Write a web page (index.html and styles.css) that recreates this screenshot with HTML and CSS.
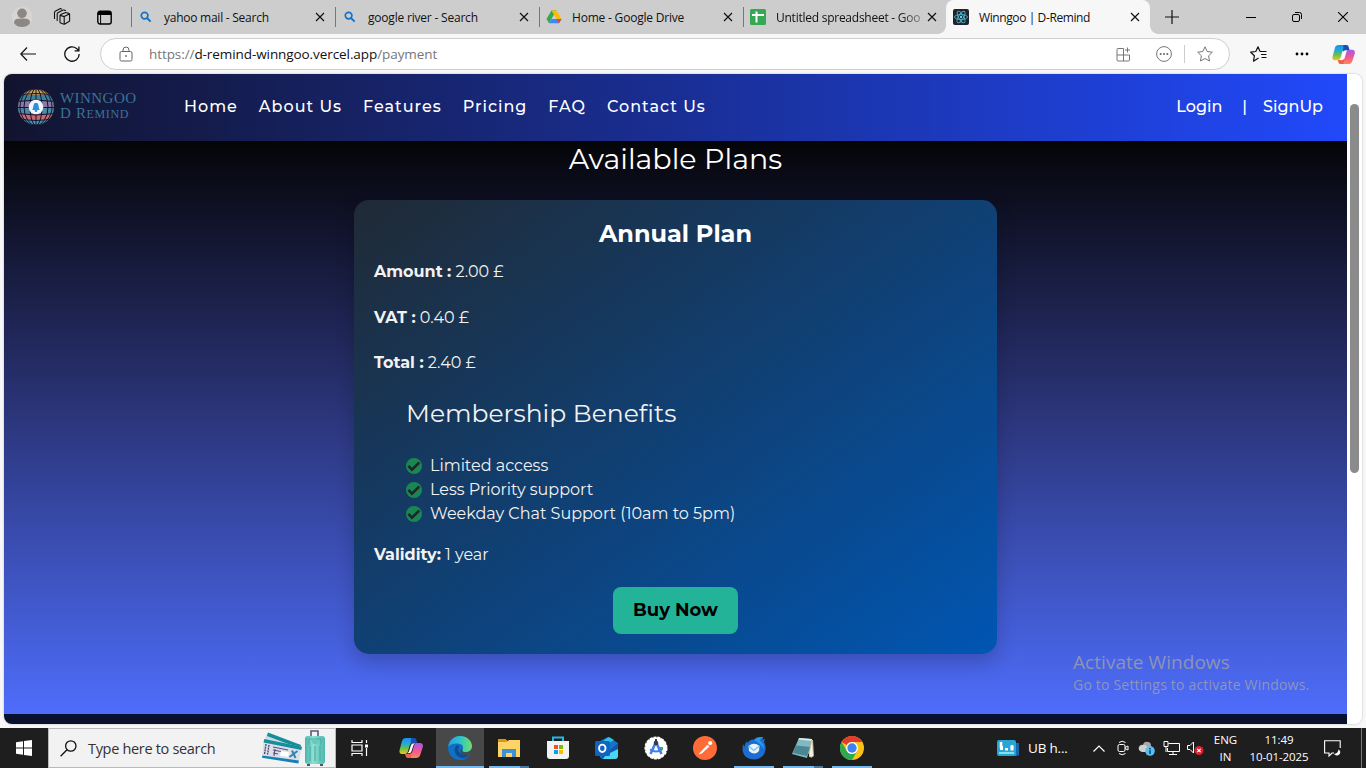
FILE: index.html
```html
<!DOCTYPE html>
<html lang="en">
<head>
<meta charset="utf-8">
<title>Winngoo | D-Remind</title>
<link rel="stylesheet" href="styles.css">
</head>
<body>
<svg width="0" height="0" class="defs" aria-hidden="true">
  <defs>
    <linearGradient id="cpA" x1="0" y1="0" x2="0" y2="1"><stop offset="0" stop-color="#1c8fe8"/><stop offset=".35" stop-color="#25a9d8"/><stop offset=".65" stop-color="#68c04a"/><stop offset="1" stop-color="#f4c51c"/></linearGradient>
    <linearGradient id="cpB" x1="0" y1="0" x2="0" y2="1"><stop offset="0" stop-color="#a259ee"/><stop offset=".5" stop-color="#f0569a"/><stop offset="1" stop-color="#fb8a56"/></linearGradient>
    <linearGradient id="edgeA" x1="0" y1="0" x2="1" y2="0"><stop offset="0" stop-color="#249fe0"/><stop offset=".5" stop-color="#2fc3c9"/><stop offset="1" stop-color="#6ee06a"/></linearGradient>
    <linearGradient id="bag" x1="0" y1="0" x2="1" y2="0"><stop offset="0" stop-color="#45b5ab"/><stop offset=".4" stop-color="#8fe0d2"/><stop offset="1" stop-color="#4bb9ae"/></linearGradient>
    <symbol id="search" viewBox="0 0 12 12"><circle cx="4.6" cy="4.6" r="3.3" fill="none" stroke="#1570c8" stroke-width="1.7"/><path d="M7 7l3.6 3.6" stroke="#1570c8" stroke-width="1.9"/></symbol>
    <symbol id="close" viewBox="0 0 10 10"><path d="M1 1l8 8M9 1l-8 8" stroke="#111" stroke-width="1.2"/></symbol>
    <symbol id="copilot" viewBox="0 0 24 22"><path d="M7 1h8l3 5h-4c-2 0-3 1-3.500 3L9 14c-.5 2-1.500 3-3.500 3H3C.8 17 0 15 .6 13L3 4c.6-2 2-3 4-3z" fill="url(#cpA)"/><path d="M12 1h3c1.500 0 2 .8 2.500 2.500L18.500 7h-4c-1.500 0-2.500.4-3 1z" fill="#1b50b8"/><path d="M17 21H9l-3-4h4c2 0 3-1 3.500-3L15 8.500C15.500 7 16.500 6 18 6h3c2.500 0 3.300 2 2.800 4l-2.600 8c-.6 2-2.200 3-4.200 3z" fill="url(#cpB)"/><path d="M12 21H9c-1.500 0-2-.8-2.500-2.500L6 17h4c1.500 0 2.300-.5 3-1.500z" fill="#ed6248"/><path d="M11.800 8.500Q12.500 6.500 14.500 6.500H16Q14.800 7 14.300 8.500L12.600 14Q12 16.200 10 16.200H8.300Q9.600 15.500 10.100 14z" fill="#fff"/></symbol>
    <symbol id="check" viewBox="0 0 16 16"><circle cx="8" cy="8" r="8" fill="#198754"/><path d="M2.400 7.800l3.600 3.800L13.300 4.500" fill="none" stroke="#212529" stroke-width="2.500"/></symbol>
  </defs>
</svg>

<header class="tabstrip">
  <svg class="avatar" viewBox="0 0 22 22"><circle cx="11" cy="11" r="10.500" fill="#d8d4d0"/><circle cx="11" cy="7.300" r="4.800" fill="#8b8784"/><path d="M3 17c0-4 3-4.500 8-4.500s8 .5 8 4.500c-2 3-5 4-8 4s-6-1-8-4z" fill="#8b8784"/></svg>
  <svg class="spaces" viewBox="0 0 18 18" fill="none" stroke="#111" stroke-width="1.100" stroke-linejoin="round"><path d="M7 7.800Q7 7 7.800 6.600L12 4.800q.8-.3 1.500-.1l2.300.7q.8.200.8 1v6q0 .8-.7 1.200l-4 2.400q-.8.400-1.600.1L7.700 15q-.7-.3-.7-1zM7.200 7.400l4 1.200 5.200-2.700M11.200 8.600v7.800M4.200 13V6q0-.8.7-1.200L9.500 2.200Q10.200 1.800 11 2l2 .7M1.500 11V4.500q0-.8.7-1.200L6.500.9Q7.200.5 8 .8l1 .3"/></svg>
  <svg class="tabmenu" viewBox="0 0 15 15"><rect x=".8" y="1.300" width="13.400" height="12.700" rx="2.200" fill="none" stroke="#000" stroke-width="1.400"/><path d="M1 3.500Q1 1 3.500 1h8Q14 1 14 3.500V5H1z"/><path d="M3.600 5v9" stroke="#000"/></svg>
  <div class="tab"><svg class="fav small"><use href="#search"/></svg><span class="t1">yahoo mail - Search</span><svg class="x"><use href="#close"/></svg></div>
  <div class="tab"><svg class="fav small"><use href="#search"/></svg><span class="t2">google river - Search</span><svg class="x"><use href="#close"/></svg></div>
  <div class="tab"><svg class="fav" viewBox="0 0 16 16"><path d="M5.500 1.500h5L5.800 9.700 3 14.300.5 10z" fill="#34a853"/><path d="M5.500 1.500h5L15.500 10h-5z" fill="#fbbc04"/><path d="M3 14.300L5.600 10h9.900L13 14.300z" fill="#4285f4"/><path d="M10.500 10h5L13 14.300z" fill="#ea4335"/><path d="M8 5.800L10.500 10h-5z" fill="#cdcdcd"/></svg><span class="t3">Home - Google Drive</span><svg class="x"><use href="#close"/></svg></div>
  <div class="tab"><svg class="fav" viewBox="0 0 16 16"><rect width="16" height="16" rx="1.500" fill="#34a853"/><path d="M2 6h12M6.500 2.500V13.500" stroke="#fff" stroke-width="2"/></svg><span class="t4 fade">Untitled spreadsheet - Goo</span><svg class="x"><use href="#close"/></svg></div>
  <div class="tab active"><svg class="fav" viewBox="0 0 16 16"><rect width="16" height="16" rx="2" fill="#20232a"/><g fill="none" stroke="#4fb3cd" stroke-width=".9"><ellipse cx="8" cy="8" rx="6.500" ry="2.500"/><ellipse cx="8" cy="8" rx="6.500" ry="2.500" transform="rotate(60 8 8)"/><ellipse cx="8" cy="8" rx="6.500" ry="2.500" transform="rotate(120 8 8)"/></g><circle cx="8" cy="8" r="1.200" fill="#61dafb"/></svg><span class="t5">Winngoo | D-Remind</span><svg class="x"><use href="#close"/></svg></div>
  <div class="newtab"><svg viewBox="0 0 14 14"><path d="M7 0v14M0 7h14" stroke="#111" stroke-width="1.200"/></svg></div>
  <div class="wincontrols">
    <svg viewBox="0 0 10 10"><path d="M0 5.500h10" stroke="#000"/></svg>
    <svg viewBox="0 0 10 10" fill="none" stroke="#000"><rect x=".5" y="2.500" width="7" height="7" rx="1.500"/><path d="M3 .5h4.500a2 2 0 0 1 2 2V7"/></svg>
    <svg viewBox="0 0 10 10"><path d="M0 0l10 10M10 0L0 10" stroke="#000" stroke-width="1.100"/></svg>
  </div>
</header>

<div class="toolbar">
  <svg class="back" viewBox="0 0 16 14" fill="none" stroke="#111" stroke-width="1.200"><path d="M7 .5L.8 7 7 13.500M1 7h15"/></svg>
  <svg class="reload" viewBox="0 0 16 16" fill="none" stroke="#111" stroke-width="1.300"><path d="M15.200 8A7.200 7.200 0 1 1 12.500 2.400L14.600 4.500M14.900.5v4.300h-4.300"/></svg>
  <div class="omnibox">
    <svg class="lock" viewBox="0 0 14 16" fill="none" stroke="#666"><rect x="1" y="5.500" width="12" height="9.500" rx="1.500"/><path d="M4 5.500V4a3 3 0 0 1 6 0v1.500"/><circle cx="7" cy="10" r=".5" fill="#666"/></svg>
    <span class="url">https://<b>d-remind-winngoo.vercel.app</b>/payment</span>
    <svg class="apps" viewBox="0 0 15 15" fill="none" stroke="#777"><path d="M7.500 1.500H2A1 1 0 0 0 1 2.500V13a1 1 0 0 0 1 1h10.500a1 1 0 0 0 1-1V8M7.500 1.500V14M1 8h12.500M11.500.5v5M9 3h5"/></svg>
    <svg class="more-c" viewBox="0 0 16 16"><circle cx="8" cy="8" r="7.400" fill="none" stroke="#777"/><g fill="#666"><circle cx="4.700" cy="8" r="1"/><circle cx="8" cy="8" r="1"/><circle cx="11.300" cy="8" r="1"/></g></svg>
    <i class="sep"></i>
    <svg class="star" viewBox="0 0 16 16" fill="none" stroke="#777" stroke-linejoin="round"><path d="M8 .8l2.200 4.700 5.100.7-3.700 3.600.9 5.200L8 12.500 3.500 15l.9-5.200L.7 6.200l5.100-.7z"/></svg>
  </div>
  <svg class="favs" viewBox="0 0 17 16" fill="none" stroke="#111" stroke-width="1.200" stroke-linejoin="round"><path d="M10 5.500L8 .8 5.800 5.500.7 6.200l3.700 3.600-.9 5.400L8.500 12M10 5.500h6.500M11 8.500h5.500M11.500 11.500h5"/></svg>
  <svg class="dots" viewBox="0 0 14 4"><circle cx="2" cy="2" r="1.400"/><circle cx="7" cy="2" r="1.400"/><circle cx="12" cy="2" r="1.400"/></svg>
  <svg class="cop"><use href="#copilot"/></svg>
</div>

<div class="window">
  <div class="site">
    <nav class="nav">
      <div class="logo">
        <svg viewBox="0 0 38 38"><defs><clipPath id="globe"><circle cx="19" cy="19" r="18"/></clipPath></defs><g clip-path="url(#globe)"><path fill="#14152f" d="M0 0h38v38H0z"/><path fill="#c9a05c" d="M0 0h38v7H0z"/><path fill="#3f8298" d="M0 7h38v6H0z"/><path fill="#8a78a5" d="M0 13h38v7H0z"/><path fill="#4f8aa5" d="M0 20h38v6H0z"/><path fill="#c86a74" d="M0 26h38v6H0z"/><path fill="#4996b2" d="M0 32h38v6H0z"/><g fill="none" stroke="#14152f" stroke-width="1"><path d="M0 8q19-5 38 0M0 13.500q19-3 38 0M0 19.500h38M0 25.500q19 3 38 0M0 30q19 5 38 0M19 0v38"/><ellipse cx="19" cy="19" rx="6" ry="18.500"/><ellipse cx="19" cy="19" rx="12" ry="18.500"/><ellipse cx="19" cy="19" rx="16" ry="18.500"/></g></g><circle cx="19" cy="19" r="7.300" fill="#f4f6fb"/><path d="M15 22c1.500-1 1-6 2.800-7h2.400c1.800 1 1.300 6 2.800 7z" fill="#2c91dc"/><circle cx="19" cy="22.800" r="1.300" fill="#2c91dc"/></svg>
        <div class="brand"><span class="b1">WINNGOO</span><span class="b2">D R<small>EMIND</small></span></div>
      </div>
      <div class="links"><a>Home</a><a>About Us</a><a>Features</a><a>Pricing</a><a>FAQ</a><a>Contact Us</a></div>
      <div class="auth"><a>Login</a><span>|</span><a>SignUp</a></div>
    </nav>
    <main class="plans">
      <h1>Available Plans</h1>
      <section class="card">
        <h2>Annual Plan</h2>
        <p><b>Amount :</b> 2.00 £</p>
        <p><b>VAT :</b> 0.40 £</p>
        <p><b>Total :</b> 2.40 £</p>
        <h3>Membership Benefits</h3>
        <ul>
          <li><svg><use href="#check"/></svg>Limited access</li>
          <li><svg><use href="#check"/></svg>Less Priority support</li>
          <li><svg><use href="#check"/></svg>Weekday Chat Support (10am to 5pm)</li>
        </ul>
        <p class="validity"><b>Validity:</b> 1 year</p>
        <button>Buy Now</button>
      </section>
    </main>
    <footer class="foot"></footer>
  </div>
  <div class="scroll"><div class="thumb"></div></div>
</div>

<div class="watermark"><div class="w1">Activate Windows</div><div class="w2">Go to Settings to activate Windows.</div></div>

<div class="taskbar">
  <div class="start"><svg viewBox="0 0 16 16" fill="#fff"><path d="M0 2.200l7-1V7.500H0zM8 1.100L16 0v7.500H8zM0 8.500h7v6.300l-7-1zM8 8.500h8V16l-8-1.100z"/></svg></div>
  <div class="searchbox">
    <svg class="mag" viewBox="0 0 17 17" fill="none" stroke="#111" stroke-width="1.300"><circle cx="10.800" cy="6" r="5.200"/><path d="M7 9.800L.6 16.300"/></svg>
    <span>Type here to search</span>
    <svg class="travel" viewBox="0 0 66 38"><path d="M6 4l34 13-5 12L2 17z" fill="#d3d9e3"/><path d="M7 3.500l33 12.500-.8 3.500L6 7z" fill="#128f98"/><path d="M3 10l38 8-3.500 16L1 28z" fill="#dcdeea"/><path d="M3.300 10L41 17.800l-.7 3.200L2.600 13.500z" fill="#148f9b"/><path d="M1.400 26.500l36.500 5-.6 3L1 28.800z" fill="#1480b5"/><path d="M5 15l-1.500 10M8 16L6.500 25.500" stroke="#50496f" stroke-width="1.400" stroke-dasharray="2 .7"/><path d="M12 18l15 3M12 21l8 1.500M12 24l5 1M14 20l-1 7" stroke="#5b5479" stroke-width="1.200"/><path fill="#fff" d="M20 22l8 1.300-1 4.700-8-1.300z"/><path d="M28.500 28l8-6M31 21.500l3.500 7.500" stroke="#3586a8" stroke-width="2"/><path d="M50 8V2h7v6" fill="none" stroke="#555b7a" stroke-width="1.600"/><rect x="44" y="7" width="20" height="28" rx="3" fill="url(#bag)"/><path d="M49 17v15M54 17v15M59 17v15" stroke="#46a79d"/><path d="M48 10h12M48 10v6M60 10v6" fill="none" stroke="#46a79d"/><rect x="51" y="10" width="6" height="5" rx="2" fill="#68c8ba"/><path d="M46 35h3v2h-3zM59 35h3v2h-3z" fill="#405a70"/></svg>
  </div>
  <div class="app view"><svg viewBox="0 0 18 18" fill="none" stroke="#fff" stroke-width="1.200"><path d="M1 1v2.500h10V1M1 17v-2.500h10V17M1 6h10v6H1zM15.500 1v3M15.500 9v8"/><path fill="#fff" stroke="none" d="M14 5.500h3v3h-3z"/></svg></div>
  <div class="app"><svg class="big"><use href="#copilot"/></svg></div>
  <div class="app on full"><svg class="big" viewBox="0 0 24 24"><circle cx="12" cy="12" r="12" fill="#126fc2"/><path d="M.2 11C1 4 6 0 12 0c7 0 12 5 12 10 0 4-3 6.200-6.500 6.200-3 0-4-1.200-3-2.500 1.800-3-.5-6.200-4.800-6.200C5 7.500 1 9 .2 11z" fill="url(#edgeA)"/><path d="M8.500 9.500c-3 3-2 9 2.500 11.500 4 2.200 8 .5 11-3-1.500.8-4 1.200-6.500.6-4-.8-6.500-4-4.500-7.300.8-1.300-.8-2.800-2.500-1.800z" fill="#0c4d99"/><path d="M24 12v6l-2 0c-3 1.500-7 1.500-9-1-1-1.500-.8-3 .5-4.500.5 0 1.200.8.8 1.500-.6 1.200.8 2.200 3.200 2.200 3.500 0 6-1.700 6.500-4.200z" fill="#484848"/></svg></div>
  <div class="app on split"><svg class="big" viewBox="0 0 24 24"><path d="M1 4h9l2 2h-11z" fill="#e09b18"/><path d="M1 6h9l2-2h11v17H1z" fill="#ffd467"/><path d="M1 3h8v3H1z" fill="#dc960c"/><path d="M5 13h14v8h-4v-4H9v4H5z" fill="#3e91d3"/></svg></div>
  <div class="app"><svg class="big" viewBox="0 0 24 24"><path d="M7 6V1.500h10V6" fill="none" stroke="#28b6e8" stroke-width="2"/><path d="M1 5h22v15q0 3-3 3H4q-3 0-3-3z" fill="#f2f2f2"/><path fill="#f25022" d="M8 9h4v4H8z"/><path fill="#7fba00" d="M13 9h4v4h-4z"/><path fill="#00a4ef" d="M8 14h4v4H8z"/><path fill="#ffb900" d="M13 14h4v4h-4z"/></svg></div>
  <div class="app"><svg class="big" viewBox="0 0 24 24"><path d="M5 5l8-4 10 6v13l-3 3H7l-2-2z" fill="#1674cf"/><path d="M9 4l5-3 5 3-8 5z" fill="#2bc3ec"/><path d="M23 8v12q0 3-3 3H8l3-5z" fill="#4bd6f1"/><path d="M23 7v6l-12 6-4 4V12l8 2z" fill="#0e59ae"/><rect y="5" width="15" height="15" rx="1.500" fill="#0f64bf"/><ellipse cx="7.300" cy="12.300" rx="3.200" ry="3.700" fill="none" stroke="#fff" stroke-width="1.900"/></svg></div>
  <div class="app"><svg class="big" viewBox="0 0 24 24"><circle cx="12" cy="12" r="10.800" fill="#fff" stroke="#fff" stroke-width="1.500" stroke-dasharray="3 1"/><path d="M12 6L6.500 18M12 6l5.500 12" stroke="#407ff0" stroke-width="2.600"/><path d="M6 13.500q6 4 12 0" fill="none" stroke="#407ff0" stroke-width="1.800"/><circle cx="12" cy="7" r="2.300" fill="#333c49"/><path d="M11 3h2v3h-2z" fill="#333c49"/><path d="M16 11h3v3h-3z" fill="#43a66a"/></svg></div>
  <div class="app"><svg class="big" viewBox="0 0 24 24"><circle cx="12" cy="12" r="12" fill="#ff6c37"/><path d="M6 18l8.500-9 1.500 1.500L9 17z" fill="#fff" stroke="#fff" stroke-width=".7"/><circle cx="17.200" cy="7" r="2.100" fill="#fff"/></svg></div>
  <div class="app on"><svg class="big" viewBox="0 0 24 24"><path d="M1 8l1.500 3Q3 7 5 5l.5 2Q8 3 12 3.500 15 0 21.500 1.500L20 3.500 23 3l-1 3q2 3 1.500 8-1.500 8.500-11 9.500Q1 23 .5 13z" fill="#1b6dd0"/><path d="M12 4q5-4 9.500-2.500-3 .5-4 3 5 3 4.500 9-3-6-10-9.500z" fill="#269ce6"/><path d="M6.500 10q5.500-4.500 11 0l-.5 5q-4.500 5-10 0z" fill="#e4f3ff"/><path d="M6.500 10l5.300 4.500L17.500 10" fill="none" stroke="#8bb9de" stroke-width="1.300"/></svg></div>
  <div class="app on split"><svg class="big" viewBox="0 0 24 24"><path d="M8 2l14 2 1 16-3 2z" fill="#c9b88c"/><path d="M8 2l13 1-5 19-15-4z" fill="#81b9c0"/><path d="M5 9.500l14 1.500-3 9-14-3z" fill="#4a8792"/><path d="M8 2l13 1-.5 2-13-1.500z" fill="#dce7e8"/><path d="M21 4l1 16-4 1z" fill="#f1f2ef"/></svg></div>
  <div class="app on"><svg class="big" viewBox="0 0 24 24"><circle cx="12" cy="12" r="12" fill="#fbc116"/><path d="M1.600 6A12 12 0 0 1 22.400 6H12a6 6 0 0 0-5.200 3z" fill="#e33b2e"/><path d="M1.600 6A12 12 0 0 0 12 24l5.200-9A6 6 0 0 1 6.800 15z" fill="#2da94f"/><circle cx="12" cy="12" r="6" fill="#fff"/><circle cx="12" cy="12" r="4.700" fill="#3e82f1"/></svg></div>
  <div class="tray">
    <svg class="news" viewBox="0 0 22 16"><path d="M17 3h5v12l-2 1h-3z" fill="#1767ac"/><rect width="19" height="16" rx="2" fill="#28a5d4"/><path d="M2 12h15v2H2z" fill="#7fe2ee"/><path d="M4 2v6M15 5v4" stroke="#fff" stroke-width="2.600"/><path d="M3 6h3v4H3zM8 8h3v2.500H8zM13.500 6h3v4.500h-3z" fill="#fff"/></svg>
    <span class="ub">UB h...</span>
    <svg class="chev" viewBox="0 0 12 7" fill="none" stroke="#fff" stroke-width="1.200"><path d="M.5 6.500L6 1l5.500 5.500"/></svg>
    <svg class="meet" viewBox="0 0 12 16" fill="none" stroke="#fff"><rect x="1" y="4.500" width="7" height="7" rx="1.500"/><path d="M8 7.500L11 6v4L8 8.500M2 2.500Q5 0 8.500 2.500M2 13.500Q5 16 8.500 13.500"/></svg>
    <svg class="cloud" viewBox="0 0 17 15"><path d="M3 10q-3-1-2-4t4-2q1-4 5-3 3 0 3 4l3 5z" fill="#a8a8a8"/><path d="M4 4q4-1 7 4l-3 3H4Q0 10 1 6z" fill="#d0d0d0"/><circle cx="12" cy="10" r="4.800" fill="#58bff0"/><path d="M12 7v1.500M12 9.300V13" stroke="#083050" stroke-width="1.300"/></svg>
    <svg class="net" viewBox="0 0 17 14" fill="none" stroke="#fff"><path d="M5.500 2.500h11v8H4.500V7M10 10.500v3M6 13.500h8M1 .5h4v5H1zM3 5.500V11"/></svg>
    <svg class="vol" viewBox="0 0 17 14"><path d="M.5 4.500h2.500L6.500 1v11L3 8.500H.5z" fill="none" stroke="#fff"/><circle cx="12" cy="9.500" r="4.500" fill="#dc202c"/><path d="M10.300 7.800l3.400 3.400M13.700 7.800l-3.400 3.400" stroke="#fff" stroke-width="1.200"/></svg>
    <div class="lang"><span>ENG</span><span>IN</span></div>
    <div class="clock"><span>11:49</span><span>10-01-2025</span></div>
    <svg class="note" viewBox="0 0 17 17" fill="none" stroke="#fff" stroke-width="1.100"><path d="M10 13H8l-3 3v-3H.6V.8h15.600V8"/><path d="M14.500 9.500q-.5 4-4.500 4.500 1.500 2 4 1.300 3-1.500 2-4.300-.5-1-1.500-1.500z" fill="#fff" stroke="none"/></svg>
    <i class="peek"></i>
  </div>
</div>
</body>
</html>
```

FILE: styles.css
```css
* { box-sizing: border-box; }
body { margin: 0; width: 1366px; height: 768px; overflow: hidden; display: flex; flex-direction: column; background: #f7f7f7; font-family: "Segoe UI", "Open Sans", "Noto Sans", sans-serif; color: #111; }
.defs { position: absolute; }
svg { display: block; flex: none; }

.tabstrip { height: 34px; background: #cdcdcd; display: flex; align-items: center; }
.avatar { width: 22px; height: 22px; margin-left: 11px; }
.spaces { width: 18px; height: 18px; margin-left: 20px; }
.tabmenu { width: 15px; height: 15px; margin: 0 26px 0 26px; }
.tab { width: 204px; height: 34px; display: flex; align-items: center; font-size: 12px; padding: 0 10px 0 0; white-space: nowrap; }
.tabmenu + .tab { margin-left: -7px; }
.tab::before { content: ""; width: 1px; height: 20px; background: #777; margin-right: 7px; flex: none; }
.fav { width: 16px; height: 16px; margin-left: -1px; }
.fav.small { width: 12px; height: 12px; margin: 0 2px 0 1px; }
.tab span { margin-left: 10px; flex: 1; }
.t1, .t4 { letter-spacing: -.25px; }
.t2, .t3 { letter-spacing: -.2px; }
.t5 { letter-spacing: -.4px; }
.fade { -webkit-mask-image: linear-gradient(90deg, #000 82%, transparent 104%); mask-image: linear-gradient(90deg, #000 82%, transparent 104%); }
.x { width: 10px; height: 10px; }
.tab.active { background: #f7f7f7; border-radius: 8px 8px 0 0; width: 204px; margin-left: -1px; position: relative; }
.tab.active::before { position: absolute; left: -8px; bottom: 0; width: 8px; height: 8px; margin: 0; background: radial-gradient(circle at 0 0, #cdcdcd 7.500px, #f7f7f7 8px); }
.tab.active::after { content: ""; position: absolute; right: -8px; bottom: 0; width: 8px; height: 8px; background: radial-gradient(circle at 100% 0, #cdcdcd 7.500px, #f7f7f7 8px); }
.tab.active .fav { margin-left: 7px; }
.newtab { width: 50px; padding-left: 15px; }
.newtab svg { width: 14px; height: 14px; }
.wincontrols { margin-left: auto; display: flex; gap: 36px; padding-right: 18px; }
.wincontrols svg { width: 10px; height: 10px; }

.toolbar { height: 40px; background: #f7f7f7; display: flex; align-items: center; }
.back { width: 16px; height: 14px; margin-left: 20px; }
.reload { width: 16px; height: 16px; margin: 0 20px 0 28px; }
.omnibox { width: 1130px; height: 32px; border: 1px solid #cfcfcf; border-radius: 16px; background: #fff; display: flex; align-items: center; padding: 0 16px 0 18px; }
.lock { width: 14px; height: 16px; }
.url { font-size: 13.5px; color: #777; margin-left: 16px; flex: 1; letter-spacing: -.08px; }
.url b { font-weight: 400; color: #111; }
.apps { width: 15px; height: 15px; }
.more-c { width: 16px; height: 16px; margin-left: 25px; }
.sep { width: 1px; height: 18px; background: #ccc; margin: 0 12px; }
.star { width: 16px; height: 16px; }
.favs { width: 17px; height: 16px; margin-left: 20px; }
.dots { width: 14px; height: 4px; margin-left: 28px; }
.cop { width: 23px; height: 21px; margin-left: 23px; }

.window { height: 650px; margin: 0 4px 4px; display: flex; border-radius: 8px; overflow: hidden; background: #fff; box-shadow: 0 0 2px #aaa; }
.site { width: 1343px; display: flex; flex-direction: column; font-family: Montserrat, "Inter", sans-serif; color: #fff; }
.scroll { width: 15px; padding: 30px 3px 0; background: #fff; }
.thumb { height: 369px; width: 9px; border-radius: 5px; background: #8b8b8b; }
.nav { height: 67px; background: linear-gradient(90deg, #12142e, #2149fa); display: flex; align-items: center; font-size: 16px; font-weight: 500; padding-bottom: 2px; }
.logo { width: 159px; display: flex; padding-left: 13px; align-items: center; }
.logo svg { width: 38px; height: 38px; }
.brand { display: flex; flex-direction: column; margin-left: 5px; font: 15px/15px "Liberation Serif", serif; color: #3b7397; white-space: nowrap; }
.brand small { font-size: 12px; }
.b1 { letter-spacing: .45px; }
.b2 { letter-spacing: .65px; }
.links { display: flex; }
.links a { display: block; white-space: nowrap; margin-left: 21px; letter-spacing: 1px; }
.auth { display: flex; margin-left: auto; padding-right: 24px; }
.auth span { margin: 0 16px 0 20px; }
.plans { height: 573px; background: linear-gradient(180deg, #050508, #272f6c 42%, #4e6dfb); display: flex; flex-direction: column; align-items: center; }
h1, h2, h3, p, ul { margin: 0; }
h1 { font-size: 28.500px; line-height: 36px; font-weight: 400; height: 59px; }
.card { width: 643px; height: 454px; border-radius: 15px; background: linear-gradient(145deg, #202a35, #0056b3); box-shadow: 0 8px 20px rgba(0,0,0,.2); padding: 20px; display: flex; flex-direction: column; color: #f2f2f2; font-size: 16px; line-height: 24px; }
h2 { font-size: 24px; line-height: 28px; text-align: center; color: #fff; margin-bottom: 12px; }
.card p { margin-bottom: 21.500px; white-space: nowrap; }
h3 { font-size: 25px; line-height: 31px; font-weight: 400; margin: 1px 0 25px 32px; }
.card ul { list-style: none; padding: 0 0 0 32px; margin-bottom: 17px; }
li { display: flex; align-items: center; height: 24px; white-space: nowrap; }
li svg { width: 16px; height: 16px; margin-right: 8px; }
.card .validity { margin-bottom: 20.500px; }
.card button { width: 125px; height: 47px; margin: 0 auto; border: 0; border-radius: 8px; background: #22b398; color: #000; font: 700 18px Montserrat, "Inter", sans-serif; padding: 0 0 2px; white-space: nowrap; flex: none; }
.foot { height: 10px; background: #08122e; }

.watermark { position: absolute; left: 1073px; top: 649px; color: rgba(165,165,165,.75); white-space: nowrap; }
.w1 { font-size: 19px; line-height: 26px; letter-spacing: .05px; }
.w2 { font-size: 14px; line-height: 20px; letter-spacing: .2px; }

.taskbar { height: 40px; background: #1e1e1e; display: flex; color: #fff; }
.start { width: 48px; display: flex; align-items: center; justify-content: center; }
.start svg { width: 16px; height: 16px; }
.searchbox { width: 288px; background: #f2f2f2; border: 1px solid #b9b9b9; display: flex; align-items: center; color: #333; font-size: 14.500px; padding-left: 11px; white-space: nowrap; letter-spacing: -.32px; }
.mag { width: 17px; height: 17px; margin-right: 11px; }
.travel { width: 66px; height: 38px; margin-left: auto; margin-right: 8px; }
.app { width: 48px; height: 40px; margin-right: 1px; display: flex; align-items: center; justify-content: center; position: relative; flex: none; }
.app.view { margin-right: 3px; }
.app svg { width: 18px; height: 18px; }
.app svg.big { width: 24px; height: 24px; }
.app.full { background: #484848; }
.app.on::after { content: ""; position: absolute; left: 4px; right: 4px; bottom: 0; height: 2px; background: #76b9ed; }
.app.full::after { left: 0; right: 0; }
.app.split::after { background: linear-gradient(90deg, #76b9ed 31px, #4d7a9c 31px); }
.tray { margin-left: auto; display: flex; align-items: center; font-size: 12px; white-space: nowrap; }
.news { width: 22px; height: 16px; margin-right: 9px; }
.ub { width: 65px; font-size: 13.500px; letter-spacing: -.2px; }
.chev { width: 12px; height: 7px; margin-right: 12px; }
.meet { width: 12px; height: 16px; margin-right: 9px; }
.cloud { width: 17px; height: 15px; margin-right: 8px; }
.net { width: 17px; height: 14px; margin-right: 7px; }
.vol { width: 17px; height: 14px; }
.lang, .clock { display: flex; flex-direction: column; align-items: center; line-height: 17px; font-size: 11.500px; }
.lang { width: 43px; }
.clock { width: 64px; letter-spacing: -.1px; margin-top: -1px; }
.note { width: 17px; height: 17px; margin-left: 13px; }
.peek { width: 1px; height: 40px; background: #777; margin: 0 4px 0 20px; }
```
